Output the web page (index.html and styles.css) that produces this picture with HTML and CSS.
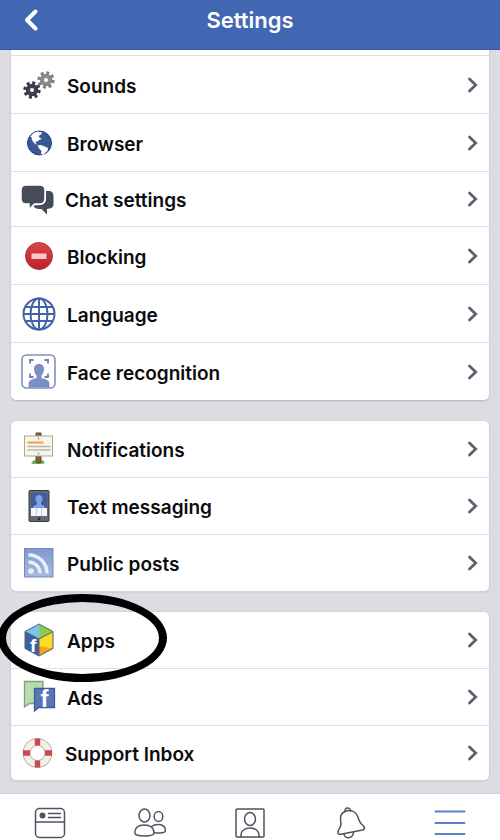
FILE: index.html
```html
<!DOCTYPE html>
<html lang="en">

<head>
  <meta charset="UTF-8" />
  <meta name="viewport" content="width=device-width, initial-scale=1.0" />
  <title>Settings</title>
  <link rel="stylesheet" href="styles.css">
</head>

<body>
  <!-- Shared shapes -->
  <svg class="sprite" aria-hidden="true">
    <symbol id="chevron" viewBox="0 0 12 18">
      <path d="M2.5 3L8.7 9l-6.2 6" fill="none" stroke="currentColor" stroke-width="2.8" stroke-linecap="round" />
    </symbol>
  </svg>

  <header class="navbar">
    <button class="back-btn" aria-label="Back">
      <svg viewBox="0 0 20 26">
        <path d="M15.5 4.5L7 13l8.500 8.500" fill="none" stroke="white" stroke-width="4" stroke-linecap="round" stroke-linejoin="round" />
      </svg>
    </button>
    <h1>Settings</h1>
  </header>

  <main class="content">
    <ul class="card card-scrolled">
      <li>
        <a class="row" href="#sounds">
          <svg class="icon" viewBox="0 0 36 36">
            <g fill="#8a8a8a">
              <circle cx="25" cy="13" r="6.2" />
              <circle cx="25" cy="13" r="7" fill="none" stroke="#808080" stroke-width="3.4" stroke-dasharray="2.9 2.6" />
              <circle cx="25" cy="13" r="2" fill="white" />
            </g>
            <g fill="#3c4050">
              <circle cx="11" cy="23" r="6.2" />
              <circle cx="11" cy="23" r="7" fill="none" stroke="#343847" stroke-width="3.4" stroke-dasharray="2.9 2.6" />
              <circle cx="11" cy="23" r="2" fill="white" />
            </g>
          </svg>
          <span class="label">Sounds</span>
          <svg class="chevron"><use href="#chevron" /></svg>
        </a>
      </li>
      <li>
        <a class="row" href="#browser">
          <svg class="icon" viewBox="0 0 36 36">
            <circle cx="18.5" cy="18" r="12" fill="#3a5796" stroke="#27407c" />
            <path d="M9 12l3.500-4 4-1.500 4.500 1-1 2-2.500 1.500 1 1.500 2.500 1.500-2 .5-2 1.500-2.500 1 1.500 3-3-2-2-3-.5-3z" fill="white" />
            <path d="M16.500 20.500l3-.5 3 1 4.500 2-.5 3-2.500 2-1.500 2-2.500-1 .5-3-2.500-2.500z" fill="white" />
          </svg>
          <span class="label">Browser</span>
          <svg class="chevron"><use href="#chevron" /></svg>
        </a>
      </li>
      <li>
        <a class="row row-compact" href="#chat">
          <svg class="icon" viewBox="0 0 36 36">
            <path d="M25 10h2.500c3.500 0 5 2 5 5v8c0 2.500-1 4-4 4.500L26 28v5.500L20.500 28c-4 0-7-.5-8.500-3.500l8-.5c3.500-1 5-3 5-6z" fill="#454b58" />
            <path d="M5 4h14c3.500 0 5 2 5 5v8c0 4-2 6-5 6h-5.500L8 28.500V23H5c-3 0-5-2-5-5V9c0-3 2-5 5-5z" fill="#454b58" stroke="white" stroke-width="1.500" />
          </svg>
          <span class="label">Chat settings</span>
          <svg class="chevron"><use href="#chevron" /></svg>
        </a>
      </li>
      <li>
        <a class="row" href="#blocking">
          <svg class="icon" viewBox="0 0 36 36">
            <defs>
              <linearGradient id="red" x1="0" y1="0" x2="0" y2="1">
                <stop offset="0" stop-color="#d84a4a" />
                <stop offset="1" stop-color="#ba2026" />
              </linearGradient>
            </defs>
            <circle cx="18" cy="18" r="13.5" fill="url(#red)" stroke="#b83338" />
            <rect x="10.5" y="15.5" width="15" height="5.5" fill="#f8c8cc" />
          </svg>
          <span class="label">Blocking</span>
          <svg class="chevron"><use href="#chevron" /></svg>
        </a>
      </li>
      <li>
        <a class="row" href="#language">
          <svg class="icon" viewBox="0 0 36 36">
            <g fill="none" stroke="#4463a6" stroke-width="2">
              <circle cx="18" cy="18" r="15.5" />
              <ellipse cx="18" cy="18" rx="8.5" ry="15.5" />
              <path d="M18 2.500v31M2.500 18h31M5 11h26M5 25h26" />
            </g>
          </svg>
          <span class="label">Language</span>
          <svg class="chevron"><use href="#chevron" /></svg>
        </a>
      </li>
      <li>
        <a class="row" href="#face">
          <svg class="icon" viewBox="0 0 36 36">
            <rect x="1" y="1" width="33" height="33" rx="4.5" fill="white" stroke="#8391b8" stroke-width="1.6" />
            <path d="M9 9.500V6h3.500M23.500 6H27v3.500M9 19.500V23h3.500M23.500 23H27v-3.500" fill="none" stroke="#727f9f" stroke-width="1.8" />
            <path d="M13 15c0-3 2-5 5-5s5 2 5 5c0 3-1 5-2.500 6.500V24c4 1 8 2 8 6v3.500h-21V30c0-4 4-5 8-6v-2.500C14 20 13 18 13 15z" fill="#7b8fc2" />
          </svg>
          <span class="label">Face recognition</span>
          <svg class="chevron"><use href="#chevron" /></svg>
        </a>
      </li>
    </ul>

    <ul class="card">
      <li>
        <a class="row" href="#notifications">
          <svg class="icon" viewBox="0 0 36 36">
            <path d="M10 32l3-3 2 1 2-2 3 2 2-1 2 3-3 1h-9z" fill="#63b35c" />
            <path d="M15 2h5v29l-2.500 1-2.500-1z" fill="#846239" stroke="#5d4425" />
            <rect x="3.5" y="5" width="28" height="20" fill="#faf5e7" stroke="#aaa69d" />
            <path d="M6.500 11.500h16" stroke="#e9a15e" stroke-width="2" />
            <path d="M6.500 15.500h23M6.500 19h23" stroke="#b9b5b2" stroke-width="1.5" />
            <path d="M17.500 6.500v2M17.500 21.500v2" stroke="#a3a09b" stroke-width="1.5" />
          </svg>
          <span class="label">Notifications</span>
          <svg class="chevron"><use href="#chevron" /></svg>
        </a>
      </li>
      <li>
        <a class="row" href="#texts">
          <svg class="icon" viewBox="0 0 36 36">
            <rect x="8" y="2.5" width="20" height="31" rx="1" fill="#646974" stroke="#353941" />
            <rect x="10" y="5" width="16" height="23" fill="#405e9e" />
            <path d="M14.500 11c0-2 1-4 3.500-4s3.500 2 3.500 4-1 3-1.500 4v1.500c2 .5 4 1 4 4.500H12c0-3.500 2-4 4-4.500V15c-.5-1-1.500-2-1.500-4z" fill="#7fa2e6" />
            <rect x="10" y="20" width="16" height="8" fill="#f4f5f8" />
            <path d="M15.500 20v8M20.500 20v8" stroke="#c9cdd5" />
            <circle cx="18" cy="31" r="1.4" fill="#272a30" />
          </svg>
          <span class="label">Text messaging</span>
          <svg class="chevron"><use href="#chevron" /></svg>
        </a>
      </li>
      <li>
        <a class="row" href="#posts">
          <svg class="icon" viewBox="0 0 36 36">
            <defs>
              <linearGradient id="feed" x1="0" y1="0" x2="0" y2="1">
                <stop offset="0" stop-color="#8299cf" />
                <stop offset="1" stop-color="#a6b8df" />
              </linearGradient>
            </defs>
            <rect x="3.5" y="3.5" width="28.5" height="28.5" fill="url(#feed)" stroke="#7489bc" />
            <circle cx="10" cy="26" r="2.8" fill="#e8eefb" />
            <path d="M7.500 17c6.500 0 11.500 5 11.500 11.500M7.500 10c10.500 0 18.500 8 18.500 18.500" fill="none" stroke="#e8eefb" stroke-width="3.4" />
          </svg>
          <span class="label">Public posts</span>
          <svg class="chevron"><use href="#chevron" /></svg>
        </a>
      </li>
    </ul>

    <ul class="card">
      <li class="highlighted">
        <a class="row" href="#apps">
          <svg class="icon" viewBox="0 0 36 36">
            <path d="M18 2L4 9.500 18 17z" fill="#78c8ee" />
            <path d="M18 2l14 7.500L18 17z" fill="#8bcb50" />
            <path d="M4 9.500L18 17v17L4 26.500z" fill="#3e5fa3" />
            <path d="M32 9.500L18 17v17l14-7.500z" fill="#fcdc20" />
            <path d="M18 24l14 2.500L18 34z" fill="#f8a01e" />
            <path d="M18 2l14 7.500v17L18 34 4 26.500v-17zM4 9.500L18 17l14-7.500M18 17v17" fill="none" stroke="#4d6377" />
            <text class="logo-f" x="9" y="30" font-size="19">f</text>
          </svg>
          <span class="label">Apps</span>
          <svg class="chevron"><use href="#chevron" /></svg>
        </a>
        <span class="ring"></span>
      </li>
      <li>
        <a class="row" href="#ads">
          <svg class="icon" viewBox="0 0 36 36">
            <path d="M3.500 2.500h18.500v22H8.500L3.500 28z" fill="#b9dcae" stroke="#78a573" stroke-width="1.3" />
            <path d="M13.500 9.500h20v19H17.500l-4 3.500z" fill="#5876b7" stroke="#405a98" stroke-width="1.3" />
            <text class="logo-f" x="19.5" y="28" font-size="24">f</text>
          </svg>
          <span class="label">Ads</span>
          <svg class="chevron"><use href="#chevron" /></svg>
        </a>
      </li>
      <li>
        <a class="row row-compact" href="#support">
          <svg class="icon" viewBox="0 0 36 36">
            <g fill="none">
              <circle cx="16.5" cy="18" r="11" stroke="#a8a196" stroke-width="7.6" />
              <circle cx="16.5" cy="18" r="11" stroke="#f3f0e9" stroke-width="6.2" />
              <path d="M16.500 3.500v7M16.500 25.500v7M2 18h7M24 18h7" stroke="#cd4653" stroke-width="5.4" />
            </g>
          </svg>
          <span class="label">Support Inbox</span>
          <svg class="chevron"><use href="#chevron" /></svg>
        </a>
      </li>
    </ul>
  </main>

  <nav class="tabbar">
    <a href="#feed-tab" aria-label="News Feed">
      <svg viewBox="0 0 32 32">
        <rect x="1.5" y="1.5" width="29" height="29" rx="4" />
        <path d="M1.500 15h29M14.500 6.500h12M14.500 10.500h12" />
        <circle cx="8.5" cy="8.5" r="3" fill="#50535f" stroke="none" />
      </svg>
    </a>
    <a href="#friends-tab" aria-label="Friends">
      <svg viewBox="0 0 32 32">
        <ellipse cx="10.5" cy="8.5" rx="5.5" ry="6.5" />
        <ellipse cx="24.5" cy="9.5" rx="4.3" ry="5" />
        <path d="M.8 26c0-5 3.500-8 9.500-8s9.700 3 9.700 8c0 2-4 3-9.700 3S.8 28 .8 26z" />
        <path d="M17.500 19.500c2-1.500 4-2 6.500-2 4.500 0 7.500 2 7.500 6.500 0 1.500-5 2.500-11 1.800" />
      </svg>
    </a>
    <a href="#profile-tab" aria-label="Profile">
      <svg viewBox="0 0 32 32">
        <rect x="2" y="2" width="28" height="28" rx="1" />
        <ellipse cx="16" cy="12" rx="5.5" ry="6.5" />
        <path d="M7 30v-2c0-4 3.500-7 9-7s9 3 9 7v2" />
      </svg>
    </a>
    <a href="#alerts-tab" aria-label="Alerts">
      <svg viewBox="0 0 32 32">
        <path d="M11 4.500c-1-4.500 6-4.500 5.500-.5" />
        <path d="M11 4.500C5 7 6.500 13 7 17c0 4-3.500 5-3 9 .3 1.500 1.500 1.500 3 1.200l21.500-4.200c2-.5 2.500-2 1.500-3.500-2-2-4-3-5-6.500C24 9 21 3.500 15.500 3.500c-1.500 0-3 .3-4.500 1z" />
        <path d="M10 27c.5 5 9 5.500 9.500-2" />
      </svg>
    </a>
    <a class="active" href="#menu-tab" aria-label="Menu">
      <svg viewBox="0 0 32 32">
        <path d="M1.500 4.500h29M1.500 16h29M1.500 27h29" />
      </svg>
    </a>
  </nav>
</body>

</html>
```
FILE: styles.css
```css
* {
  box-sizing: border-box;
}

/* General Styles */
body {
  margin: 0;
  min-height: 100vh;
  display: flex;
  flex-direction: column;
  font-family: Inter, "Liberation Sans", sans-serif;
  background: #dcdde2;
  color: #0c0c0e;
}

.sprite {
  display: none;
}

/* Top Bar */
.navbar {
  display: grid;
  grid-template-columns: 60px 1fr 60px;
  align-items: center;
  height: 50px;
  padding-bottom: 9px;
  background: #4167b2;
  border-bottom: 1px solid #36579a;
}

.navbar h1 {
  margin: 0;
  font-size: 22px;
  font-weight: 600;
  line-height: 26px;
  text-align: center;
  color: white;
}

.back-btn {
  display: flex;
  width: 40px;
  padding: 0 0 0 20px;
  border: none;
  background: none;
  cursor: pointer;
}

.back-btn svg {
  width: 20px;
  height: 26px;
}

/* Settings Cards */
.content {
  flex: 1;
  display: flex;
  flex-direction: column;
  gap: 21px;
  padding: 0 11px 13px;
}

.card {
  margin: 0;
  padding: 0;
  list-style: none;
  background: white;
  border-radius: 5px;
  box-shadow: 0 0 0 1px #d2d3d8, 0 1px 2px #b4b5bb;
}

.card li + li {
  border-top: 1px solid #dfe0e3;
}

.row {
  display: flex;
  align-items: center;
  gap: 10px;
  height: 56px;
  padding: 0 10px;
  color: inherit;
  text-decoration: none;
}

/* First card is scrolled partly under the top bar */
.card-scrolled {
  padding-top: 5px;
  border-radius: 0 0 5px 5px;
  box-shadow: 0 1px 2px #b4b5bb;
}

.card-scrolled li:first-child {
  border-top: 1px solid #dfe0e3;
}

.card-scrolled .row {
  height: 57px;
}

.card .row-compact {
  gap: 8px;
  height: 54px;
}

.icon {
  flex: none;
  width: 36px;
  height: 36px;
}

.logo-f {
  font-family: "Liberation Sans", sans-serif;
  font-weight: 700;
  fill: white;
}

.label {
  flex: 1;
  padding-top: 4px;
  font-size: 19px;
  font-weight: 600;
  line-height: 24px;
}

.chevron {
  flex: none;
  width: 12px;
  height: 18px;
  color: #5f6270;
}

/* Hand-drawn circle around a row */
.highlighted {
  position: relative;
}

.ring {
  position: absolute;
  top: -18px;
  left: -13px;
  width: 169px;
  height: 88px;
  border: 8px solid black;
  border-radius: 50%;
  z-index: 1;
  pointer-events: none;
}

/* Bottom Tab Bar */
.tabbar {
  display: grid;
  grid-template-columns: repeat(5, 1fr);
  height: 47px;
  padding-top: 13px;
  background: white;
  border-top: 1px solid #cdced6;
}

.tabbar a {
  display: flex;
  justify-content: center;
}

.tabbar svg {
  width: 32px;
  height: 32px;
  fill: none;
  stroke: #50535f;
  stroke-width: 1.5;
  stroke-linecap: round;
}

.tabbar .active svg {
  stroke: #5580d0;
  stroke-width: 2;
}
```
